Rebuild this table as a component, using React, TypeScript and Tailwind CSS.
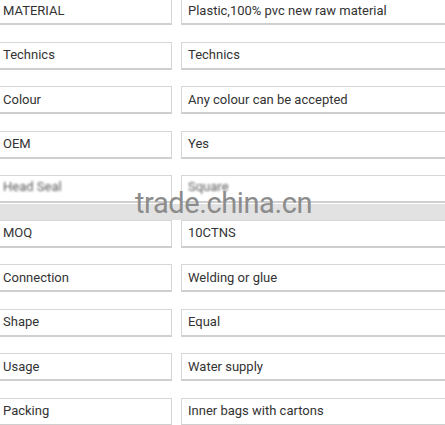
const rows: [string, string][] = [
  ['MATERIAL', 'Plastic,100% pvc new raw material'],
  ['Technics', 'Technics'],
  ['Colour', 'Any colour can be accepted'],
  ['OEM', 'Yes'],
  ['Head Seal', 'Square'],
  ['MOQ', '10CTNS'],
  ['Connection', 'Welding or glue'],
  ['Shape', 'Equal'],
  ['Usage', 'Water supply'],
  ['Packing', 'Inner bags with cartons'],
];

function Cell({ text, blurred, className }: { text: string; blurred?: boolean; className: string }) {
  return (
    <div
      className={`h-[28px] border border-[#d6d6d6] border-b-2 border-b-[#cfcfcf] bg-white flex items-center ${className}`}
    >
      <span className={blurred ? 'blur-[1px] opacity-80 -mt-[3px]' : ''}>{text}</span>
    </div>
  );
}

export default function App() {
  return (
    <div
      className="relative w-[445px] h-[425px] overflow-hidden bg-white text-[13px] text-[#333]"
      style={{ fontFamily: 'Roboto, "Liberation Sans", Arial, sans-serif' }}
    >
      <div className="flex flex-col gap-[16.5px] -mt-[3px]">
        {rows.map(([label, value], i) => (
          <div key={label} className="relative flex gap-[9px]">
            <Cell text={label} blurred={i === 4} className="w-[176px] -ml-[4px] pl-[6px]" />
            <Cell text={value} blurred={i === 4} className="flex-1 -mr-[2px] pl-[6px]" />
            {i === 4 && (
              <div className="absolute left-0 right-0 top-[29px] h-[16px] bg-[#e2e2e2]" />
            )}
          </div>
        ))}
      </div>
      {/* watermark */}
      <div className="absolute left-[135px] top-[189px] text-[29px] tracking-[-0.4px] text-[#8c8c8c] leading-none">
        trade.china.cn
      </div>
    </div>
  );
}
